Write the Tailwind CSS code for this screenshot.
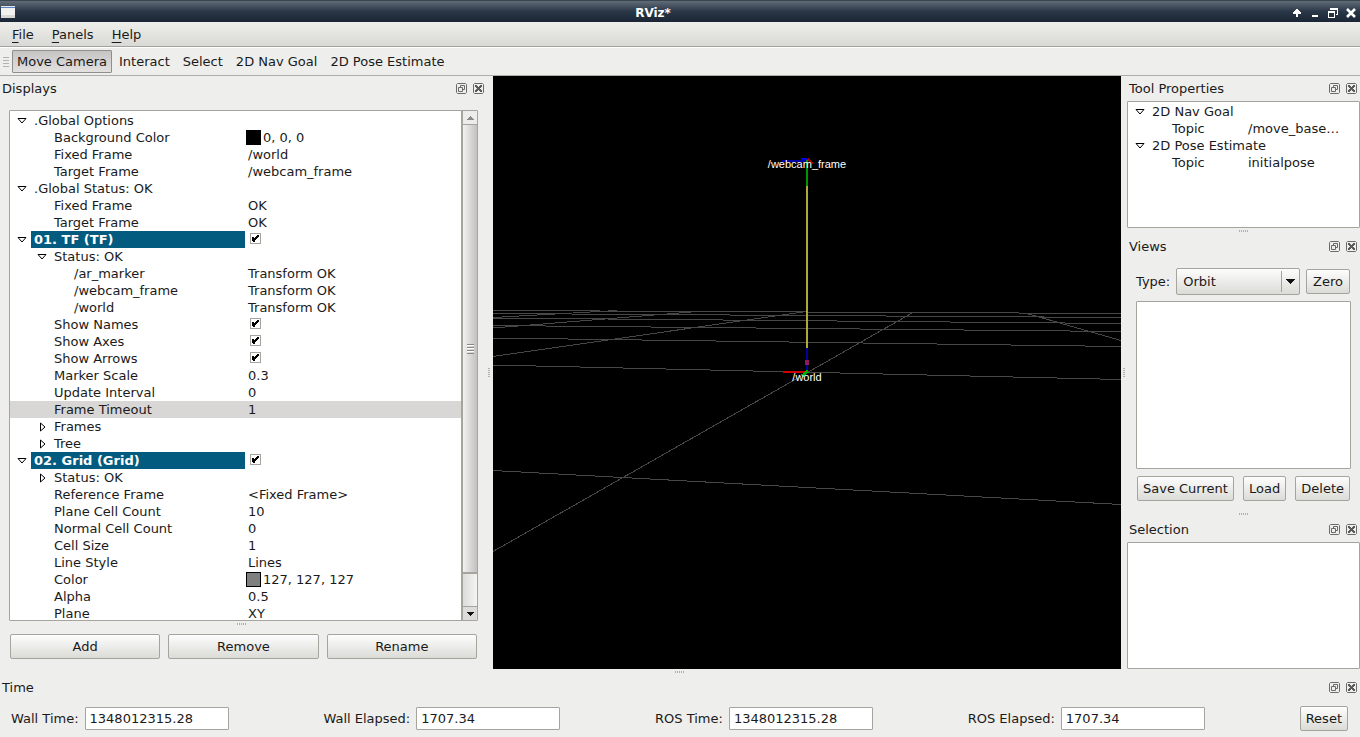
<!DOCTYPE html>
<html lang="en">
<head>
  <meta charset="UTF-8">
  <meta name="viewport" content="width=device-width, initial-scale=1.0">
  <title>RViz*</title>
  <script src="https://cdn.jsdelivr.net/npm/@tailwindcss/browser@4"></script>
</head>
<body class="flex h-screen flex-col overflow-hidden bg-[#eeeeec] font-['DejaVu_Sans',sans-serif] text-[13px] leading-[17px] text-[#1a1a1a]">

  <!-- Shared icons -->
  <svg class="hidden">
    <symbol id="icon-float" viewBox="0 0 11 11">
      <path d="M1.5 .5h8l1 1v8l-1 1h-8l-1-1v-8z" fill="none" stroke="#6b6b68"/>
      <path d="M4.5 5V2.5h4v4H6.500M2.500 4.500h4v4h-4z" fill="none" stroke="#6b6b68"/>
    </symbol>
    <symbol id="icon-close" viewBox="0 0 11 11">
      <path d="M1.5 .5h8l1 1v8l-1 1h-8l-1-1v-8z" fill="none" stroke="#6b6b68"/>
      <path d="M2 2h2v1h1v1h1V3h1V2h2v2H8v1H7v1h1v1h1v2H7V8H6V7H5v1H4v1H2V7h1V6h1V5H3V4H2z" fill="#5c5c5a"/>
    </symbol>
    <symbol id="icon-open" viewBox="0 0 10 6">
      <path d="M1 .5h8L5 5z" fill="#fff" stroke="#000"/>
    </symbol>
    <symbol id="icon-shut" viewBox="0 0 6 10">
      <path d="M.5 1v8L5 5z" fill="#fff" stroke="#000"/>
    </symbol>
    <symbol id="icon-tick" viewBox="0 0 11 11">
      <path d="M2 4h2v1h1V4h1V3h1V2h2v2H8v1H7v1H6v1H5v2H3V8H2z" fill="#000"/>
    </symbol>
  </svg>

  <!-- Window title bar -->
  <header class="flex h-[22px] shrink-0 items-center border-t border-[#3a4552] bg-linear-to-b from-[#626c78] via-[#2a3747] via-50% to-[#1a2635] pr-[3px]">
    <svg class="ml-px h-3 w-[14px]" viewBox="0 0 14 12">
      <rect width="14" height="12" fill="#f1f1ef"/>
      <rect width="14" height="1" fill="#dfe6ef"/>
      <rect y="1" width="14" height="1" fill="#5a86c4"/>
      <rect y="9" width="14" height="3" fill="#d8d8d4"/>
    </svg>
    <h1 class="flex-1 pt-[3px] text-center text-[12px] font-bold text-white">RViz*</h1>
    <div class="flex items-center gap-1.5 pt-0.5">
      <button type="button" aria-label="Shade">
        <svg class="size-3" viewBox="0 0 12 12"><path d="M5 2h2v1h1v1h1v1h1v2H7v3H5V7H2V5h1V4h1V3h1z" fill="#fff"/></svg>
      </button>
      <button type="button" aria-label="Minimize">
        <svg class="size-3" viewBox="0 0 12 12"><path d="M3 8h6v2H3z" fill="#fff"/></svg>
      </button>
      <button type="button" aria-label="Restore">
        <svg class="size-3" viewBox="0 0 12 12"><path d="M3 1h8v7H9V7h1V3H3zM1 4h7v7H1zM2 6v4h5V6z" fill="#fff" fill-rule="evenodd"/></svg>
      </button>
      <button type="button" aria-label="Close">
        <svg class="size-3" viewBox="0 0 12 12"><path d="M2 2l8 8M10 2L2 10" stroke="#fff" stroke-width="2.600"/></svg>
      </button>
    </div>
  </header>

  <!-- Menu bar -->
  <nav class="flex h-[25px] shrink-0 items-center border-b border-[#a3a39d] bg-linear-to-b from-[#eeeeeb] to-[#d9dad5] px-[3px]">
    <button type="button" class="px-[9px]"><u class="underline underline-offset-3">F</u>ile</button>
    <button type="button" class="px-[9px]"><u class="underline underline-offset-3">P</u>anels</button>
    <button type="button" class="px-[9px]"><u class="underline underline-offset-3">H</u>elp</button>
  </nav>

  <!-- Tools -->
  <div class="flex h-[29px] shrink-0 items-center gap-px border-t border-b border-t-white border-b-[#aeaea9] pl-[3px]">
    <svg class="mr-0.5 h-[10px] w-[6px]" viewBox="0 0 6 10"><path d="M0 .5h6M0 3.500h6M0 6.500h6M0 9.500h6" stroke="#b4b4ae"/></svg>
    <button type="button" class="h-[23px] rounded-[1px] border border-[#8f8f8b] bg-linear-to-b from-[#c6c4c4] to-[#e2e1e0] px-1">Move Camera</button>
    <button type="button" class="h-[23px] px-1.5">Interact</button>
    <button type="button" class="h-[23px] px-1.5">Select</button>
    <button type="button" class="h-[23px] px-1.5">2D Nav Goal</button>
    <button type="button" class="h-[23px] px-1.5">2D Pose Estimate</button>
  </div>

  <main class="flex min-h-0 flex-1">
    <!-- Displays dock -->
    <section class="flex w-[484px] shrink-0 flex-col">
      <div class="flex h-[25px] shrink-0 items-center gap-1.5 pl-0.5">
        <h2 class="flex-1">Displays</h2>
        <button type="button" aria-label="Float Displays"><svg class="size-[11px]"><use href="#icon-float"/></svg></button>
        <button type="button" aria-label="Close Displays"><svg class="size-[11px]"><use href="#icon-close"/></svg></button>
      </div>

      <div class="mt-[9px] mr-1.5 ml-[9px] flex min-h-0 flex-1 overflow-hidden rounded-[1px] border border-[#a5a59d]">
        <div class="flex-1 overflow-hidden bg-white pt-px">
          <table class="w-full table-fixed border-collapse">
            <colgroup><col class="w-[21px]"><col class="w-[214px]"><col></colgroup>
            <tbody id="displayTree"></tbody>
          </table>
        </div>
        <!-- Scroll bar -->
        <div class="flex w-4 shrink-0 flex-col border-l-2 border-[#a5a59d] bg-linear-to-r from-[#dcdcd8] to-[#f4f4f2]">
          <button type="button" aria-label="Scroll up" class="flex h-[14px] items-center justify-center border-b border-[#a5a59d] bg-[#ececea]">
            <svg class="h-1 w-[7px]" viewBox="0 0 7 4"><path d="M3 0h1v1h1v1h1v1h1v1H0V3h1V2h1V1h1z" fill="#8b8b86"/></svg>
          </button>
          <div class="flex grow-14 basis-0 items-center justify-center border-b-2 border-[#a5a59d] bg-linear-to-r from-[#f1f1f0] to-[#c3c1c0]">
            <svg class="h-[10px] w-[7px]" viewBox="0 0 7 10"><path d="M0 .5h7M0 3.500h7M0 6.500h7M0 9.500h7" stroke="#888884"/><path d="M0 1.500h7M0 4.500h7M0 7.500h7" stroke="#fff"/></svg>
          </div>
          <div class="grow basis-0"></div>
          <button type="button" aria-label="Scroll down" class="flex h-[14px] items-center justify-center border-t border-[#a5a59d] bg-[#dddcdb]">
            <svg class="h-1 w-[7px]" viewBox="0 0 7 4"><path d="M0 0h7v1H6v1H5v1H4v1H3V3H2V2H1V1H0z" fill="#111"/></svg>
          </button>
        </div>
      </div>

      <div class="flex h-[13px] shrink-0 justify-center pt-0.5">
        <svg class="h-[2px] w-[10px]" viewBox="0 0 10 2"><path d="M.5 0v2M2.500 0v2M4.500 0v2M6.500 0v2M8.500 0v2" stroke="#b0b0aa"/></svg>
      </div>
      <div class="mb-[10px] grid shrink-0 grid-cols-3 gap-2 pr-[7px] pl-[10px]">
        <button type="button" class="h-[25px] rounded-[2px] border border-[#a5a59d] bg-linear-to-b from-[#fdfdfd] to-[#dbdbd7]">Add</button>
        <button type="button" class="h-[25px] rounded-[2px] border border-[#a5a59d] bg-linear-to-b from-[#fdfdfd] to-[#dbdbd7]">Remove</button>
        <button type="button" class="h-[25px] rounded-[2px] border border-[#a5a59d] bg-linear-to-b from-[#fdfdfd] to-[#dbdbd7]">Rename</button>
      </div>
    </section>

    <div class="flex w-[9px] shrink-0 items-center justify-center">
      <svg class="h-[10px] w-[2px]" viewBox="0 0 2 10"><path d="M0 .5h2M0 2.500h2M0 4.500h2M0 6.500h2M0 8.500h2" stroke="#b0b0aa"/></svg>
    </div>

    <!-- 3D view -->
    <div class="min-w-0 flex-1 bg-black">
      <svg class="h-full w-full" viewBox="493 76 628 593" preserveAspectRatio="xMidYMid slice">
        <g stroke="#474747" shape-rendering="crispEdges">
          <path d="M493 310.500L1121 313.500M493 313.500L1121 317.500M493 318L1121 323.500M493 325.500L1121 331.500M493 338L1121 346.500M493 365L1121 379.500M493 470.500L1121 504.500"/>
          <path d="M493 551.500L912 313M493 356.500L803 312M493 328L704 311M493 317.500L617 310.500M1025 313L1121 340.500"/>
        </g>
        <g shape-rendering="crispEdges">
          <path d="M782 160h25v2h-25z" fill="#0000a8"/>
          <path d="M801 158h6v2h-6z" fill="#0000e0"/>
          <path d="M808 159l5 5" stroke="#a00000" stroke-width="2"/>
          <path d="M806 160h2v27h-2z" fill="#009400"/>
          <path d="M806 186h2v162h-2z" fill="#b0a838"/>
          <path d="M806 348h2v24h-2z" fill="#0000a0"/>
          <path d="M805 360h4v5h-4z" fill="#901860"/>
          <path d="M783 371h23v2h-23z" fill="#d00000"/>
          <path d="M808 371l-6 5" stroke="#00b000" stroke-width="3"/>
        </g>
        <g fill="#fff" font-family="'Liberation Sans', Arial, sans-serif" font-size="11" text-anchor="middle">
          <text x="807" y="168">/webcam_frame</text>
          <text x="807" y="381">/world</text>
        </g>
      </svg>
    </div>

    <div class="flex w-[6px] shrink-0 items-center justify-center">
      <svg class="h-[10px] w-[2px]" viewBox="0 0 2 10"><path d="M0 .5h2M0 2.500h2M0 4.500h2M0 6.500h2M0 8.500h2" stroke="#b0b0aa"/></svg>
    </div>

    <!-- Right docks -->
    <div class="flex w-[233px] shrink-0 flex-col">
      <section class="flex grow basis-0 flex-col">
        <div class="flex h-[25px] shrink-0 items-center gap-1.5 pr-[3px] pl-0.5">
          <h2 class="flex-1">Tool Properties</h2>
          <button type="button" aria-label="Float Tool Properties"><svg class="size-[11px]"><use href="#icon-float"/></svg></button>
          <button type="button" aria-label="Close Tool Properties"><svg class="size-[11px]"><use href="#icon-close"/></svg></button>
        </div>
        <div class="flex-1 rounded-[1px] border border-[#a5a59d] bg-white pt-px">
          <table class="w-full table-fixed border-collapse">
            <colgroup><col class="w-[21px]"><col class="w-[96px]"><col></colgroup>
            <tbody id="toolTree"></tbody>
          </table>
        </div>
      </section>

      <div class="flex h-[6px] shrink-0 items-center justify-center">
        <svg class="h-[2px] w-[10px]" viewBox="0 0 10 2"><path d="M.5 0v2M2.500 0v2M4.500 0v2M6.500 0v2M8.500 0v2" stroke="#b0b0aa"/></svg>
      </div>

      <section class="flex shrink-0 flex-col">
        <div class="flex h-[25px] shrink-0 items-center gap-1.5 pr-[3px] pl-0.5">
          <h2 class="flex-1">Views</h2>
          <button type="button" aria-label="Float Views"><svg class="size-[11px]"><use href="#icon-float"/></svg></button>
          <button type="button" aria-label="Close Views"><svg class="size-[11px]"><use href="#icon-close"/></svg></button>
        </div>
        <div class="p-[9px]">
          <div class="flex items-center gap-1.5 pr-px">
            <label for="viewType">Type:</label>
            <div class="grid flex-1">
              <select id="viewType" class="col-start-1 row-start-1 h-[27px] appearance-none rounded-[2px] border border-[#a5a59d] bg-linear-to-b from-[#fdfdfd] to-[#dbdbd7] pl-1.5">
                <option>Orbit</option>
                <option>FPS</option>
                <option>TopDownOrtho</option>
              </select>
              <svg class="pointer-events-none col-start-1 row-start-1 mr-[5px] h-[21px] w-[14px] self-center justify-self-end" viewBox="0 0 14 21">
                <path d="M.5 0v21" stroke="#a5a59d"/>
                <path d="M5 8h9v1h-1v1h-1v1h-1v1h-1v1H9v-1H8v-1H7v-1H6V9H5z" fill="#111"/>
              </svg>
            </div>
            <button type="button" class="h-[25px] rounded-[2px] border border-[#a5a59d] bg-linear-to-b from-[#fdfdfd] to-[#dbdbd7] px-1.5">Zero</button>
          </div>
          <div class="mt-1.5 h-[168px] rounded-[1px] border border-[#a5a59d] bg-white"></div>
          <div class="mt-[7px] flex justify-between px-px">
            <button type="button" class="h-[25px] rounded-[2px] border border-[#a5a59d] bg-linear-to-b from-[#fdfdfd] to-[#dbdbd7] px-[5px]">Save Current</button>
            <button type="button" class="h-[25px] rounded-[2px] border border-[#a5a59d] bg-linear-to-b from-[#fdfdfd] to-[#dbdbd7] px-[5px]">Load</button>
            <button type="button" class="h-[25px] rounded-[2px] border border-[#a5a59d] bg-linear-to-b from-[#fdfdfd] to-[#dbdbd7] px-[5px]">Delete</button>
          </div>
        </div>
      </section>

      <div class="flex h-[7px] shrink-0 items-center justify-center">
        <svg class="h-[2px] w-[10px]" viewBox="0 0 10 2"><path d="M.5 0v2M2.500 0v2M4.500 0v2M6.500 0v2M8.500 0v2" stroke="#b0b0aa"/></svg>
      </div>

      <section class="flex grow basis-0 flex-col">
        <div class="flex h-[25px] shrink-0 items-center gap-1.5 pr-[3px] pl-0.5">
          <h2 class="flex-1">Selection</h2>
          <button type="button" aria-label="Float Selection"><svg class="size-[11px]"><use href="#icon-float"/></svg></button>
          <button type="button" aria-label="Close Selection"><svg class="size-[11px]"><use href="#icon-close"/></svg></button>
        </div>
        <div class="flex-1 rounded-[1px] border border-[#a5a59d] bg-white"></div>
      </section>
    </div>
  </main>

  <div class="flex h-[6px] shrink-0 items-center justify-center">
    <svg class="h-[2px] w-[10px]" viewBox="0 0 10 2"><path d="M.5 0v2M2.500 0v2M4.500 0v2M6.500 0v2M8.500 0v2" stroke="#b0b0aa"/></svg>
  </div>

  <!-- Time dock -->
  <footer class="shrink-0 pb-1.5">
    <div class="flex h-[25px] items-center gap-1.5 pr-[3px] pl-0.5">
      <h2 class="flex-1">Time</h2>
      <button type="button" aria-label="Float Time"><svg class="size-[11px]"><use href="#icon-float"/></svg></button>
      <button type="button" aria-label="Close Time"><svg class="size-[11px]"><use href="#icon-close"/></svg></button>
    </div>
    <div class="mt-1.5 flex items-center justify-between pr-3 pl-[11px]">
      <div class="flex items-center gap-1.5">
        <label for="wallTime">Wall Time:</label>
        <input id="wallTime" type="text" readonly value="1348012315.28" class="h-[23px] w-[144px] rounded-[1px] border border-[#a5a59d] bg-white px-1">
      </div>
      <div class="flex items-center gap-1.5">
        <label for="wallElapsed">Wall Elapsed:</label>
        <input id="wallElapsed" type="text" readonly value="1707.34" class="h-[23px] w-[144px] rounded-[1px] border border-[#a5a59d] bg-white px-1">
      </div>
      <div class="flex items-center gap-1.5">
        <label for="rosTime">ROS Time:</label>
        <input id="rosTime" type="text" readonly value="1348012315.28" class="h-[23px] w-[144px] rounded-[1px] border border-[#a5a59d] bg-white px-1">
      </div>
      <div class="flex items-center gap-1.5">
        <label for="rosElapsed">ROS Elapsed:</label>
        <input id="rosElapsed" type="text" readonly value="1707.34" class="h-[23px] w-[144px] rounded-[1px] border border-[#a5a59d] bg-white px-1">
      </div>
      <button type="button" class="h-[25px] rounded-[2px] border border-[#a5a59d] bg-linear-to-b from-[#fdfdfd] to-[#dbdbd7] px-[5px]">Reset</button>
    </div>
  </footer>

  <script>
    // level, name, value, options
    const displays = [
      [0, '.Global Options', '', { arrow: 'open' }],
      [1, 'Background Color', '0, 0, 0', { swatch: '#000000' }],
      [1, 'Fixed Frame', '/world'],
      [1, 'Target Frame', '/webcam_frame'],
      [0, '.Global Status: OK', '', { arrow: 'open' }],
      [1, 'Fixed Frame', 'OK'],
      [1, 'Target Frame', 'OK'],
      [0, '01. TF (TF)', '', { arrow: 'open', check: true, display: true }],
      [1, 'Status: OK', '', { arrow: 'open' }],
      [2, '/ar_marker', 'Transform OK'],
      [2, '/webcam_frame', 'Transform OK'],
      [2, '/world', 'Transform OK'],
      [1, 'Show Names', '', { check: true }],
      [1, 'Show Axes', '', { check: true }],
      [1, 'Show Arrows', '', { check: true }],
      [1, 'Marker Scale', '0.3'],
      [1, 'Update Interval', '0'],
      [1, 'Frame Timeout', '1', { current: true }],
      [1, 'Frames', '', { arrow: 'shut' }],
      [1, 'Tree', '', { arrow: 'shut' }],
      [0, '02. Grid (Grid)', '', { arrow: 'open', check: true, display: true }],
      [1, 'Status: OK', '', { arrow: 'shut' }],
      [1, 'Reference Frame', '<Fixed Frame>'],
      [1, 'Plane Cell Count', '10'],
      [1, 'Normal Cell Count', '0'],
      [1, 'Cell Size', '1'],
      [1, 'Line Style', 'Lines'],
      [1, 'Color', '127, 127, 127', { swatch: '#7f7f7f' }],
      [1, 'Alpha', '0.5'],
      [1, 'Plane', 'XY']
    ];

    const tools = [
      [0, '2D Nav Goal', '', { arrow: 'open' }],
      [1, 'Topic', '/move_base…'],
      [0, '2D Pose Estimate', '', { arrow: 'open' }],
      [1, 'Topic', 'initialpose']
    ];

    const escapeHtml = (s) => s.replace(/&/g, '&amp;').replace(/</g, '&lt;').replace(/>/g, '&gt;');

    function arrowIcon(kind) {
      if (kind === 'open') return '<svg class="h-[6px] w-[10px]"><use href="#icon-open"/></svg>';
      if (kind === 'shut') return '<svg class="ml-[3px] h-[10px] w-[6px]"><use href="#icon-shut"/></svg>';
      return '';
    }

    function renderTree(id, rows) {
      document.getElementById(id).innerHTML = rows.map(([level, name, value, opts = {}], i) => {
        const nameId = id + '-' + i;
        const rootArrow = level === 0 ? arrowIcon(opts.arrow) : '';
        const childArrow = level > 0 ? arrowIcon(opts.arrow) : '';
        const pad = ['pl-[3px]', 'pl-1.5', 'pl-[26px]'][level];
        const nested = level > 0 ? `<span class="flex w-[17px] shrink-0 items-center">${childArrow}</span>` : '';

        let cell = `<span class="pl-[3px]">${escapeHtml(value)}</span>`;
        if (opts.swatch) {
          cell = `<span class="flex items-center gap-0.5 pl-px"><span class="size-[15px] border border-black" style="background:${opts.swatch}"></span>${value}</span>`;
        }
        if (opts.check) {
          cell = `<span class="ml-[5px] grid w-[11px] pb-0.5">
            <input type="checkbox" checked aria-labelledby="${nameId}" class="col-start-1 row-start-1 size-[11px] appearance-none border border-[#a5a59d] bg-white">
            <svg class="pointer-events-none col-start-1 row-start-1 size-[11px]"><use href="#icon-tick"/></svg>
          </span>`;
        }

        return `<tr class="h-[17px] ${opts.current ? 'bg-[#d8d7d5]' : ''}">
          <td class="p-0"><span class="flex h-[17px] items-center pl-[7px]">${rootArrow}</span></td>
          <td class="p-0 ${opts.display ? 'bg-[#035b80] font-bold text-white' : ''}">
            <span class="flex h-[17px] items-center whitespace-nowrap ${pad}">${nested}<span id="${nameId}">${escapeHtml(name)}</span></span>
          </td>
          <td class="p-0"><span class="flex h-[17px] items-center whitespace-nowrap">${cell}</span></td>
        </tr>`;
      }).join('');
    }

    renderTree('displayTree', displays);
    renderTree('toolTree', tools);
  </script>
</body>
</html>
